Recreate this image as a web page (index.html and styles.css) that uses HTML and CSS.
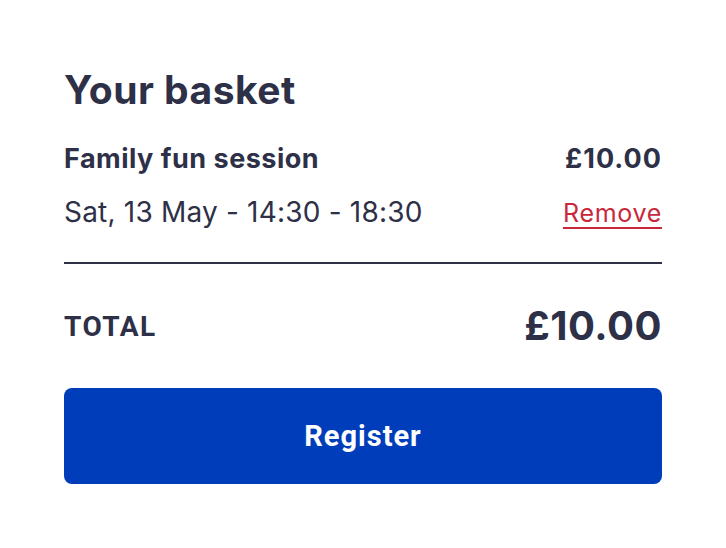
FILE: index.html
```html
<!DOCTYPE html>
<html>
<head>
<meta charset="utf-8">
<link rel="stylesheet" href="styles.css">
</head>
<body>
<main class="basket">
  <h1 class="title">Your basket</h1>
  <div class="item">
    <div class="item-row">
      <span class="item-name">Family fun session</span>
      <span class="item-price">£10.00</span>
    </div>
    <div class="item-row item-meta">
      <span class="item-date">Sat, 13 May - 14:30 - 18:30</span>
      <a class="remove" href="#">Remove</a>
    </div>
  </div>
  <div class="total">
    <span class="total-label">TOTAL</span>
    <span class="total-price">£10.00</span>
  </div>
  <button class="register">Register</button>
</main>
</body>
</html>
```
FILE: styles.css
```css
* { box-sizing: border-box; }
html, body { margin: 0; background: #fff; }
body { font-family: Inter, "Noto Sans", sans-serif; color: #2d3047; }
.basket { padding: 66px 64px 0 64px; width: 726px; }
.title { margin: 0; font-size: 39px; font-weight: 700; line-height: 48px; letter-spacing: 0.5px; }
.item { border-bottom: 2px solid #2d3047; padding: 27px 0 32px; }
.item-row { display: flex; justify-content: space-between; align-items: baseline; }
.item-name { font-size: 27px; font-weight: 700; line-height: 36px; letter-spacing: 0.5px; }
.item-price { font-size: 27px; font-weight: 700; letter-spacing: 1px; }
.item-meta { margin-top: 17px; }
.item-date { font-size: 28px; line-height: 36px; font-weight: 400; letter-spacing: 0.2px; }
.remove { font-size: 25px; letter-spacing: 0.7px; color: #c8283c; text-decoration: underline; text-underline-offset: 5px; text-decoration-thickness: 2px; }
.total { display: flex; justify-content: space-between; align-items: center; height: 48px; margin: 38px 0; }
.total-label { font-family: Roboto, sans-serif; font-weight: 700; font-size: 28px; letter-spacing: 1.5px; }
.total-price { font-size: 40px; line-height: 48px; font-weight: 700; letter-spacing: 0.5px; }
.register { display: block; width: 100%; height: 96px; border: 0; border-radius: 8px; background: #003dbb; color: #fff; font-family: Roboto, sans-serif; font-weight: 700; font-size: 29px; letter-spacing: 1px; }
```
